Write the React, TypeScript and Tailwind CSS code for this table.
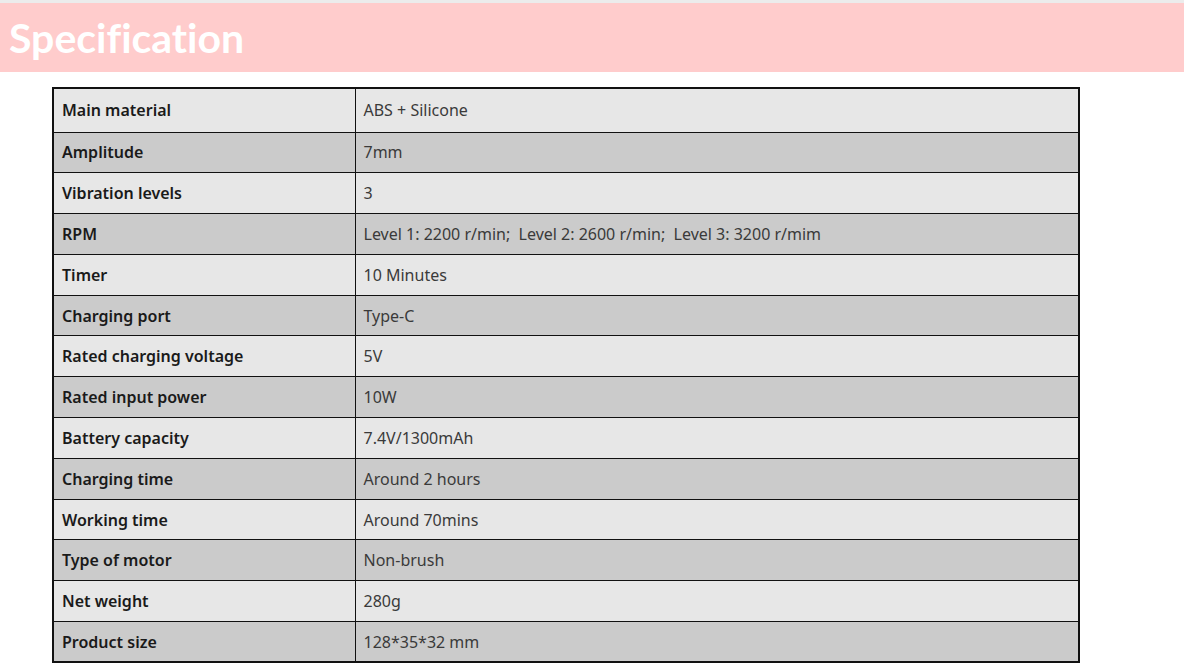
const rows: [string, string][] = [
  ["Main material", "ABS + Silicone"],
  ["Amplitude", "7mm"],
  ["Vibration levels", "3"],
  ["RPM", "Level 1: 2200 r/min;  Level 2: 2600 r/min;  Level 3: 3200 r/mim"],
  ["Timer", "10 Minutes"],
  ["Charging port", "Type-C"],
  ["Rated charging voltage", "5V"],
  ["Rated input power", "10W"],
  ["Battery capacity", "7.4V/1300mAh"],
  ["Charging time", "Around 2 hours"],
  ["Working time", "Around 70mins"],
  ["Type of motor", "Non-brush"],
  ["Net weight", "280g"],
  ["Product size", "128*35*32 mm"],
];

export default function App() {
  return (
    <div className="w-[1184px] h-[670px] bg-white overflow-hidden" style={{ fontFamily: '"Noto Sans", "Open Sans", sans-serif' }}>
      <div className="h-[3px] bg-[#ececec]" />
      <div className="h-[69px] bg-[#ffcccc] flex items-center pl-[9px]">
        <span
          className="text-white font-bold text-[41px] leading-none [font-variant-ligatures:none]"
          style={{ fontFamily: 'Lato, "Open Sans", sans-serif' }}
        >
          Specification
        </span>
      </div>
      <div className="pt-[15px] pl-[52px]">
        <table className="w-[1028px] border-collapse border-2 border-[#111] text-[16px]">
          <tbody>
            {rows.map(([k, v], i) => (
              <tr key={k} className={i % 2 === 0 ? "bg-[#e7e7e7]" : "bg-[#cbcbcb]"}>
                <td
                  className={`w-[302px] border border-[#111] pl-[8px] font-semibold text-[#1a1a1a] ${i === 0 ? "h-[44px]" : "h-[40.8px]"}`}
                >
                  {k}
                </td>
                <td className="border border-[#111] pl-[8px] text-[#3a3a3a] whitespace-pre">{v}</td>
              </tr>
            ))}
          </tbody>
        </table>
      </div>
    </div>
  );
}
